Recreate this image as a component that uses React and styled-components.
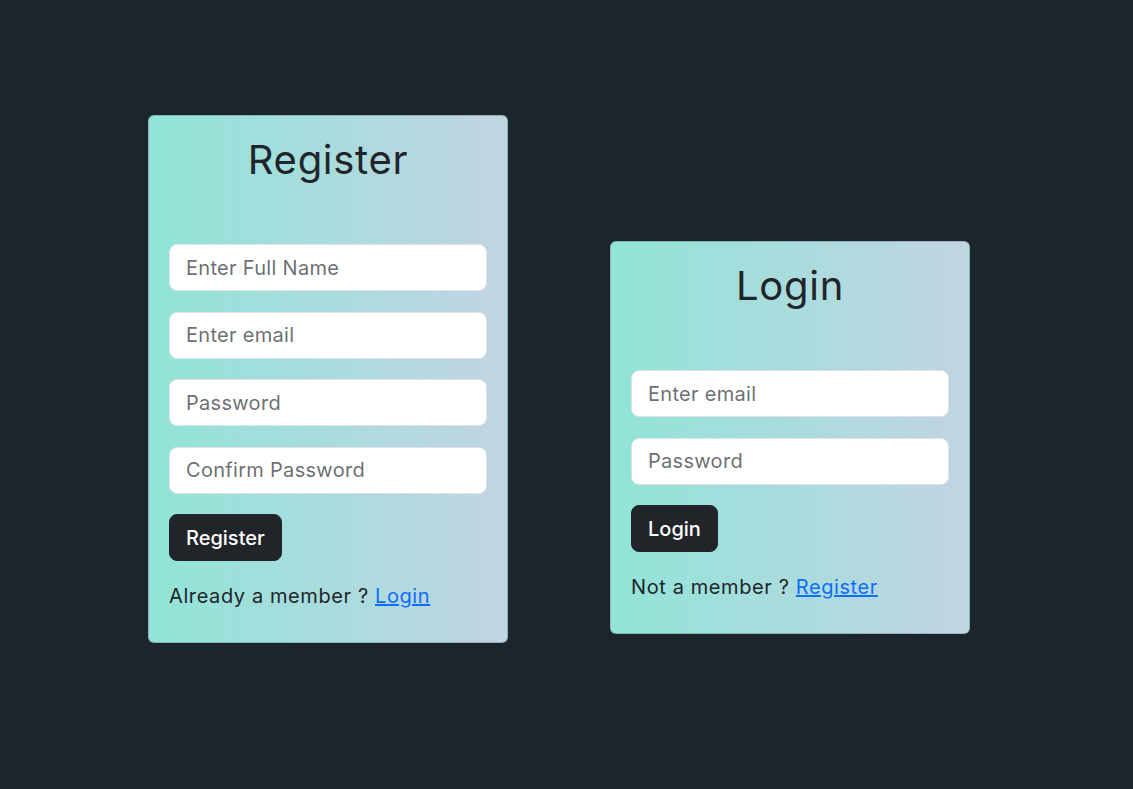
import React from "react";
import styled, { createGlobalStyle } from "styled-components";

const Global = createGlobalStyle`
  * { box-sizing: border-box; }
  html, body { margin: 0; padding: 0; }
  body {
    background: #1b252b;
    font-family: Inter, "Open Sans", sans-serif;
    color: #212529;
    min-height: 789px;
  }
`;

const Page = styled.main`
  display: flex;
  align-items: flex-start;
  gap: 102px;
  padding: 115px 0 0 148px;
`;

const Card = styled.section`
  width: 360px;
  margin-top: ${(p) => p.$offset || 0}px;
  padding: 20px 20px 0;
  border: 1px solid rgba(0, 0, 0, 0.175);
  border-radius: 6px;
  background: linear-gradient(90deg, #91e4d8 0%, #c2d4e2 100%);
  display: flex;
  flex-direction: column;
`;

const Title = styled.h1`
  margin: 0 0 60px;
  font-size: 40px;
  line-height: 48px;
  font-weight: 400;
  letter-spacing: 0.7px;
  text-align: center;
  color: #212529;
`;

const Form = styled.form`
  display: flex;
  flex-direction: column;
  gap: 20.5px;
`;

const Input = styled.input`
  display: block;
  width: 100%;
  height: 47px;
  padding: 0 16px;
  font-family: inherit;
  font-size: 20px;
  letter-spacing: 0.3px;
  color: #212529;
  background: #fff;
  border: 1px solid #dee2e6;
  border-radius: 8px;
  outline: none;
  &::placeholder {
    color: rgba(33, 37, 41, 0.68);
  }
`;

const Button = styled.button`
  align-self: flex-start;
  height: 47px;
  padding: 0 16px;
  font-family: inherit;
  font-size: 20px;
  font-weight: 500;
  color: #fff;
  background: #212529;
  border: 1px solid #212529;
  border-radius: 8px;
  cursor: pointer;
`;

const Footer = styled.p`
  margin: 20px 0 31px;
  font-size: 20px;
  line-height: 30px;
  letter-spacing: 0.6px;
`;

const Link = styled.a`
  color: #0d6efd;
  text-decoration: underline;
`;

export default function App() {
  return (
    <>
      <Global />
      <Page>
        <Card>
          <Title>Register</Title>
          <Form onSubmit={(e) => e.preventDefault()}>
            <Input type="text" placeholder="Enter Full Name" />
            <Input type="email" placeholder="Enter email" />
            <Input type="password" placeholder="Password" />
            <Input type="password" placeholder="Confirm Password" />
            <Button type="submit">Register</Button>
          </Form>
          <Footer>
            Already a member ? <Link href="#">Login</Link>
          </Footer>
        </Card>
        <Card $offset={126}>
          <Title>Login</Title>
          <Form onSubmit={(e) => e.preventDefault()}>
            <Input type="email" placeholder="Enter email" />
            <Input type="password" placeholder="Password" />
            <Button type="submit">Login</Button>
          </Form>
          <Footer>
            Not a member ? <Link href="#">Register</Link>
          </Footer>
        </Card>
      </Page>
    </>
  );
}
